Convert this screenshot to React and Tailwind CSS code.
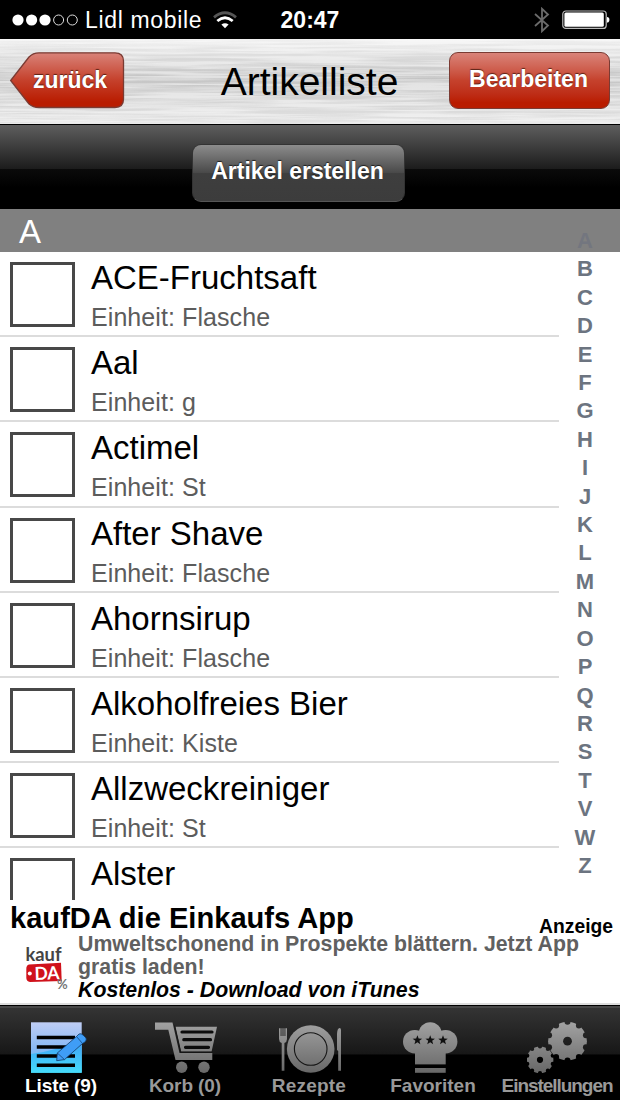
import React from 'react';

const items = [
  { name: 'ACE-Fruchtsaft', unit: 'Flasche' },
  { name: 'Aal', unit: 'g' },
  { name: 'Actimel', unit: 'St' },
  { name: 'After Shave', unit: 'Flasche' },
  { name: 'Ahornsirup', unit: 'Flasche' },
  { name: 'Alkoholfreies Bier', unit: 'Kiste' },
  { name: 'Allzweckreiniger', unit: 'St' },
  { name: 'Alster' },
];

const letters = 'ABCDEFGHIJKLMNOPQRSTVWZ'.split('');

const polar = (cx, cy, r, angle) => [cx + r * Math.cos(angle), cy + r * Math.sin(angle)];

const starPoints = (cx, cy) =>
  Array.from({ length: 10 }, (_, i) =>
    polar(cx, cy, i % 2 ? 2.1 : 5, -Math.PI / 2 + (i * Math.PI) / 5).join(',')
  ).join(' ');

const GreyGradient = ({ id }) => (
  <linearGradient id={id} gradientUnits="userSpaceOnUse" x1="0" y1="0" x2="0" y2="52">
    <stop offset="0" stopColor="#a2a2a2" />
    <stop offset="1" stopColor="#666" />
  </linearGradient>
);

const ListIcon = () => (
  <svg width="62" height="52" viewBox="0 0 62 52">
    <defs>
      <linearGradient id="paper" x1="0" y1="0" x2="0" y2="1">
        <stop offset="0" stopColor="#bfcdf4" />
        <stop offset="0.55" stopColor="#86b8f5" />
        <stop offset="1" stopColor="#4ddcfb" />
      </linearGradient>
      <linearGradient id="gloss" x1="0" y1="0" x2="0" y2="1">
        <stop offset="0" stopColor="#3f9cf5" />
        <stop offset="1" stopColor="#45dcfb" />
      </linearGradient>
    </defs>
    <rect x="0" y="0.3" width="50.7" height="50.4" fill="url(#paper)" />
    <path d="M0 32 Q25 29 50.7 17 V50.7 H0Z" fill="url(#gloss)" />
    <path d="M5.8 15.5H44M5.8 25H44M5.8 34H44M5.8 43.2H44" stroke="#000" strokeWidth="3.6" />
    <path d="M26.3 31 L45.5 14.5 L48 12 Q50 11 52 13 L55 16 Q56 18 54 20 L51.5 21.5 L33.5 37.6 L25.7 38.7Z" fill="#3f9df6" stroke="#123a66" strokeWidth="0.8" />
    <path d="M26.3 31 L33.5 37.6 M45.5 14.5 L51.5 21.5" stroke="#123a66" strokeWidth="0.7" />
  </svg>
);

const CartIcon = () => (
  <svg width="62" height="52" viewBox="0 0 62 52">
    <defs><GreyGradient id="cart" /></defs>
    <g fill="url(#cart)">
      <path d="M0 0.5H17.5L24.5 31H57.3V38H20.5L13.3 7.8H0Z" />
      <path d="M20.5 4.7H62L56.6 29.6H26.2Z" />
      <circle cx="26.7" cy="45.3" r="5.7" />
      <circle cx="49" cy="45.3" r="5.7" />
    </g>
    <path d="M19.5 3.5L25.6 30.3H57" stroke="#151515" strokeWidth="0.9" fill="none" />
    <path d="M27 10H57M28.8 17.7H55.5M30.5 25.3H53.5" stroke="#0c0c0c" strokeWidth="3.2" strokeLinecap="round" />
  </svg>
);

const PlateIcon = () => (
  <svg width="62" height="52" viewBox="0 0 62 52">
    <defs><GreyGradient id="plate" /></defs>
    <g fill="url(#plate)">
      <circle cx="31.7" cy="27" r="23.8" />
      <path d="M0 6.3H1.6V14H2.5V6.3H3.5V14H4.5V6.3H5.5V14H6.4V6.3H8V17Q8 20 5.4 21V48.7H2.7V21Q0 20 0 17Z" />
      <path d="M58 28V12Q58.3 6 60.6 6Q62 6 62 8V48.7H59.2V29Z" />
    </g>
    <circle cx="31.7" cy="27" r="16.3" fill="none" stroke="#161616" strokeWidth="1.1" />
  </svg>
);

const ChefHatIcon = () => (
  <svg width="62" height="52" viewBox="0 0 62 52" className="translate-x-0">
    <defs><GreyGradient id="hat" /></defs>
    <g fill="url(#hat)">
      <circle cx="11.8" cy="19.7" r="11.8" />
      <circle cx="42.6" cy="19.7" r="11.8" />
      <circle cx="27.2" cy="11.7" r="11.5" />
      <rect x="12" y="14" width="30.7" height="28.4" />
      <rect x="12" y="46" width="30.7" height="4.8" />
    </g>
    <g fill="#101010">
      <polygon points={starPoints(14.4, 18.2)} />
      <polygon points={starPoints(27.2, 18.2)} />
      <polygon points={starPoints(40, 18.2)} />
    </g>
  </svg>
);

// A disc with its hole and the gaps between the teeth masked out
const Gear = ({ id, cx, cy, r, hole, notch, count, turn }) => (
  <>
    <mask id={id} maskUnits="userSpaceOnUse" x="0" y="0" width="62" height="52">
      <circle cx={cx} cy={cy} r={r} fill="#fff" />
      <circle cx={cx} cy={cy} r={hole} fill="#000" />
      {Array.from({ length: count }, (_, i) => {
        const [x, y] = polar(cx, cy, r, turn + (i * 2 * Math.PI) / count);
        return <circle key={i} cx={x} cy={y} r={notch} fill="#000" />;
      })}
    </mask>
    <rect width="62" height="52" fill="url(#gears)" mask={`url(#${id})`} />
  </>
);

const GearsIcon = () => (
  <svg width="62" height="52" viewBox="0 0 62 52">
    <defs><GreyGradient id="gears" /></defs>
    <Gear id="gear-big" cx={40.5} cy={19.2} r={19.4} hole={4.4} notch={3} count={10} turn={-Math.PI / 2} />
    <Gear id="gear-small" cx={13} cy={37.8} r={13.4} hole={3.1} notch={2.1} count={10} turn={-Math.PI / 2} />
  </svg>
);

const tabs = [
  { label: 'Liste (9)', icon: ListIcon, className: 'text-white tracking-[-0.1px]' },
  { label: 'Korb (0)', icon: CartIcon, className: 'text-[#999] tracking-[-0.1px]' },
  { label: 'Rezepte', icon: PlateIcon, className: 'text-[#999] tracking-[0.2px]' },
  { label: 'Favoriten', icon: ChefHatIcon, className: 'text-[#999]' },
  { label: 'Einstellungen', icon: GearsIcon, className: 'text-[#999] tracking-[-1.05px]' },
];

const StatusBar = () => (
  <div className="h-[39px] shrink-0 bg-black text-white grid grid-cols-[1fr_auto_1fr] items-center px-3 text-[23px] leading-[39px]">
    <div className="flex items-center">
      <svg width="67" height="12" viewBox="0 0 67 12">
        <g fill="#fff">
          <circle cx="6" cy="6" r="5.6" />
          <circle cx="19.6" cy="6" r="5.6" />
          <circle cx="33" cy="6" r="5.6" />
        </g>
        <g fill="none" stroke="#ddd">
          <circle cx="46.6" cy="6" r="5" />
          <circle cx="60.3" cy="6" r="5" />
        </g>
      </svg>
      <span className="ml-[6px] pt-[2px] leading-[37px] tracking-[0.65px]">Lidl mobile</span>
      <svg className="ml-[11px]" width="24" height="18" viewBox="0 0 24 18" fill="none" strokeWidth="2.8">
        <path d="M1 6.3Q12 -2.7 23 6.3" stroke="#555" />
        <path d="M4.3 10Q12 3.6 19.7 10" stroke="#fff" />
        <path d="M8.4 13.6Q12 11 15.6 13.6L12 17.2Z" fill="#fff" stroke="none" />
      </svg>
    </div>
    <span className="pt-[2px] leading-[37px] font-bold">20:47</span>
    <div className="flex items-center justify-end">
      <svg width="16" height="26" viewBox="0 0 16 26" fill="none" stroke="#6b6b6b" strokeWidth="1.8">
        <path d="M1 7L14 18.5L8 24.2V1.8L14 7.5L1 19" />
      </svg>
      <svg className="ml-3 -mr-[2px]" width="48" height="20" viewBox="0 0 48 20">
        <rect x="0.8" y="1" width="43.4" height="17.4" rx="3" fill="none" stroke="#bbb" strokeWidth="1.2" />
        <rect x="2.4" y="2.6" width="39.4" height="14.2" rx="1.5" fill="#fff" />
        <path d="M45 7Q47.4 7 47.4 9.7Q47.4 12.5 45 12.5Z" fill="#fff" />
      </svg>
    </div>
  </div>
);

const NavBar = () => (
  <div className="relative h-[86px] shrink-0 border-b border-black bg-linear-to-b from-[#f0f0f0] via-[#c4c4c4] via-45% to-[#e4e4e4]">
    {/* brushed metal */}
    <svg className="absolute inset-0 opacity-50" width="620" height="85">
      <filter id="brushed" x="0" y="0" width="100%" height="100%">
        <feTurbulence type="fractalNoise" baseFrequency="0.008 0.4" numOctaves="3" seed="4" />
        <feColorMatrix values="0 0 0 0 1  0 0 0 0 1  0 0 0 0 1  3 0 0 0 -1" />
      </filter>
      <rect width="620" height="85" filter="url(#brushed)" />
    </svg>
    <div className="relative flex h-[82px] items-center justify-between pl-[10px] pr-[10px]">
      <button className="relative h-[57px] w-[115px]">
        <svg className="absolute inset-0" width="115" height="57" viewBox="0 0 115 57">
          <defs>
            <linearGradient id="back" x1="0" y1="0" x2="0" y2="1">
              <stop offset="0" stopColor="#d98379" />
              <stop offset="0.5" stopColor="#c5412c" />
              <stop offset="0.9" stopColor="#b91c00" />
            </linearGradient>
          </defs>
          <path d="M0.7 28.5L19 5Q23 0.8 29 0.8H105Q113.5 0.8 113.5 9V47Q113.5 55.5 105 55.5H29Q23 55.5 19 52Z" fill="url(#back)" stroke="#7a3b33" strokeWidth="1.3" />
        </svg>
        <span className="relative block pl-[5px] text-[23px] leading-[56px] font-bold text-white [text-shadow:0_-1px_1px_rgba(60,20,10,0.8)]">zurück</span>
      </button>
      <h1 className="text-[39px] leading-[80px] text-black pl-[45px] pt-[3px]">Artikelliste</h1>
      <button className="h-[57px] w-[161px] rounded-[9px] border border-[#7a3b33] bg-linear-to-b from-[#d98379] via-[#c5412c] to-[#b91c00] to-90% pr-[2px] pb-px text-[23px] font-bold text-white [text-shadow:0_-1px_1px_rgba(60,20,10,0.8)]">
        Bearbeiten
      </button>
    </div>
  </div>
);

const Toolbar = () => (
  <div className="flex h-[84px] shrink-0 justify-center bg-linear-[180deg,#5e5e5e_0%,#1c1c1c_52%,#0a0a0a_53%,#000_75%] pt-[19px]">
    <button className="mr-[23px] h-[58px] w-[213px] rounded-[9px] border border-[#333] border-b-[#555] bg-linear-[180deg,#8c8c8c_0%,#4a4a4a_49%,#3e3e3e_51%,#3c3c3c_100%] pr-[2px] pb-[4px] text-[23px] font-bold text-white [text-shadow:0_-1px_1px_rgba(0,0,0,0.7)]">
      Artikel erstellen
    </button>
  </div>
);

const Row = ({ name, unit }) => (
  <div className="flex h-[85.2px] w-[559px] shrink-0 border-b-2 border-[#dcdcdc] pl-[10px]">
    <div className="mt-[10px] h-[65px] w-[65px] border-[3px] border-[#484848]" />
    <div className="ml-4">
      <div className="text-[33px] leading-[52px] text-black">{name}</div>
      {unit && <div className="text-[25px] leading-[27px] tracking-[0.08px] text-[#5c5c5c]">Einheit: {unit}</div>}
    </div>
  </div>
);

const ArticleList = () => (
  <div className="relative h-[691px] shrink-0 overflow-hidden bg-white">
    <div className="h-[43px] bg-[#808080] pl-[19px] text-[33px] leading-[45px] text-white">A</div>
    <div className="flex flex-col">
      {items.map((item) => <Row key={item.name} {...item} />)}
    </div>
    <div className="absolute top-[18px] right-[15px] w-10 text-center text-[22px] leading-[28.4px] font-bold text-[#6c7480]">
      {letters.map((letter) => (
        <div key={letter} className={letter === 'A' ? 'text-[#73767f]' : ''}>{letter}</div>
      ))}
    </div>
  </div>
);

const KaufDaLogo = () => (
  <svg width="50" height="54" viewBox="0 0 50 54" fontFamily="Lato, Liberation Sans, sans-serif">
    <text x="3.5" y="20.5" fontSize="19" fontWeight="700" fill="#444" textLength="36" lengthAdjust="spacingAndGlyphs">kauf</text>
    <path d="M7 24.5L39 22.8L39.7 41L8 42Q4.5 41.5 4.3 38V29Q4.3 25 7 24.5Z" fill="#d0121b" />
    <circle cx="7.8" cy="33.5" r="2" fill="#fff" />
    <text x="12.5" y="39.5" fontSize="18" fontWeight="700" fill="#fff" textLength="25" lengthAdjust="spacingAndGlyphs" transform="rotate(-2 24 33)">DA</text>
    <text x="35" y="49" fontSize="13" fill="#777">%</text>
  </svg>
);

const AdBanner = () => (
  <div className="relative h-[105px] shrink-0 border-b-2 border-[#dedede] bg-white font-bold">
    <div className="h-8 pl-[10px] text-[29.1px] leading-[36px] text-black">kaufDA die Einkaufs App</div>
    <div className="flex pl-[22px]">
      <div className="w-14 pt-2"><KaufDaLogo /></div>
      <div className="pt-px text-[21.3px] leading-[23px] text-[#606060] whitespace-nowrap">
        <p>Umweltschonend in Prospekte blättern. Jetzt App</p>
        <p>gratis laden!</p>
        <p className="text-[21.3px] italic text-black">Kostenlos - Download von iTunes</p>
      </div>
    </div>
    <span className="absolute top-[15px] right-[7px] text-[19.3px] leading-[24px] text-black">Anzeige</span>
  </div>
);

const TabBar = () => (
  <div className="h-[95px] shrink-0 border-t border-black bg-black">
    <div className="grid h-full grid-cols-5 border-t-2 border-[#484848] bg-linear-[180deg,#343434_0%,#171717_50%,#000_51%]">
      {tabs.map(({ label, icon: Icon, className }) => (
        <div key={label} className="flex flex-col items-center pt-[14px]">
          <Icon />
          <span className={`pr-[2px] text-[19px] leading-6 font-bold whitespace-nowrap ${className}`}>{label}</span>
        </div>
      ))}
    </div>
  </div>
);

const App = () => {
  return (
    <div className="flex h-[1100px] w-[620px] flex-col overflow-hidden bg-white font-['Liberation_Sans',Arial,sans-serif]">
      <StatusBar />
      <NavBar />
      <Toolbar />
      <ArticleList />
      <AdBanner />
      <TabBar />
    </div>
  );
};

export default App;
